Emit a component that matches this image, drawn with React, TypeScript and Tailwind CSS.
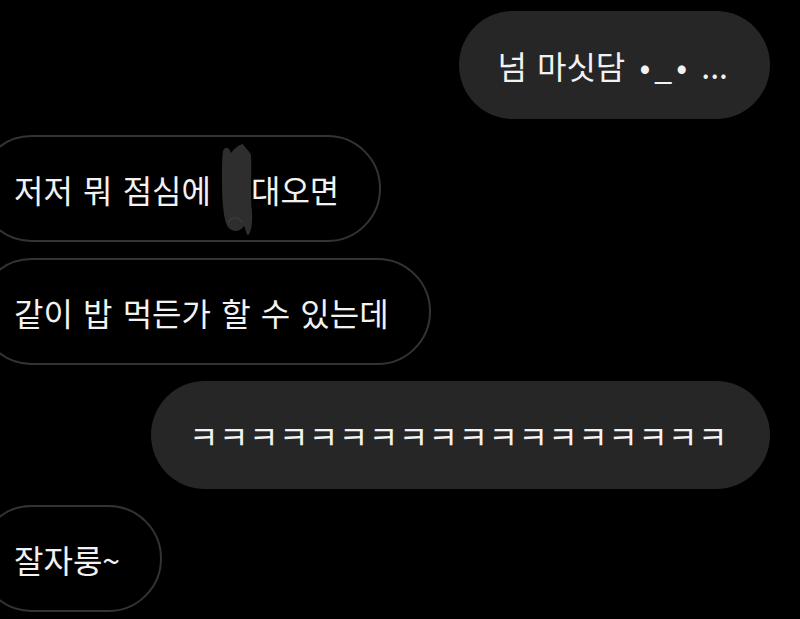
import React from 'react';

const font = { fontFamily: '"Noto Sans CJK KR", "Noto Sans", sans-serif', wordSpacing: '3px' };

// covered name, drawn as a marker blot
function Scribble() {
  return (
    <span className="relative inline-block w-[40px] h-[1em] align-middle">
      <svg className="absolute left-[9px] top-[-30px]" width="34" height="94" viewBox="0 0 34 94">
        <path
          d="M3 8 C5 3 9 4 11 10 C14 6 18 2 23 1 C25 5 29 7 31 12 C32 30 30 50 32 70 C33 82 30 92 28 92 C26 92 26 86 24 83 C20 89 13 90 8 84 C4 78 2 60 2 40 C2 26 2 14 3 8 Z"
          fill="#2e2e2e"
        />
        <path d="M8 80 C12 72 20 74 22 80" stroke="#3a3a3a" strokeWidth="1.5" fill="none" />
      </svg>
    </span>
  );
}

function Mine({ children, className = '' }: { children: React.ReactNode; className?: string }) {
  return (
    <div className="flex justify-end pr-[30px]">
      <div className={`h-[108px] rounded-full bg-[#262626] flex items-center text-[#f2f2f2] ${className}`}>
        {children}
      </div>
    </div>
  );
}

function Theirs({ children }: { children: React.ReactNode }) {
  return (
    <div className="flex justify-start ml-[-22px]">
      <div className="h-[107px] rounded-full border-2 border-[#333333] pl-[34px] pr-[40px] flex items-center text-[#f2f2f2]">
        {children}
      </div>
    </div>
  );
}

export default function App() {
  return (
    <div className="w-[800px] h-[619px] bg-black overflow-hidden pt-[11px] flex flex-col gap-4 text-[32px] leading-none" style={font}>
      <Mine className="pl-[38px] pr-[42px]">
        <span>
          넘 마싯담 <span className="tracking-[4px] ml-[4px]">•_•</span> ...
        </span>
      </Mine>
      <Theirs>
        저저 뭐 점심에<Scribble />대오면
      </Theirs>
      <Theirs>같이 밥 먹든가 할 수 있는데</Theirs>
      <Mine className="pl-[38px] pr-[42px]">
        <span className="tracking-[0.5px]">ㅋㅋㅋㅋㅋㅋㅋㅋㅋㅋㅋㅋㅋㅋㅋㅋㅋㅋ</span>
      </Mine>
      <Theirs>잘자룽~</Theirs>
    </div>
  );
}
